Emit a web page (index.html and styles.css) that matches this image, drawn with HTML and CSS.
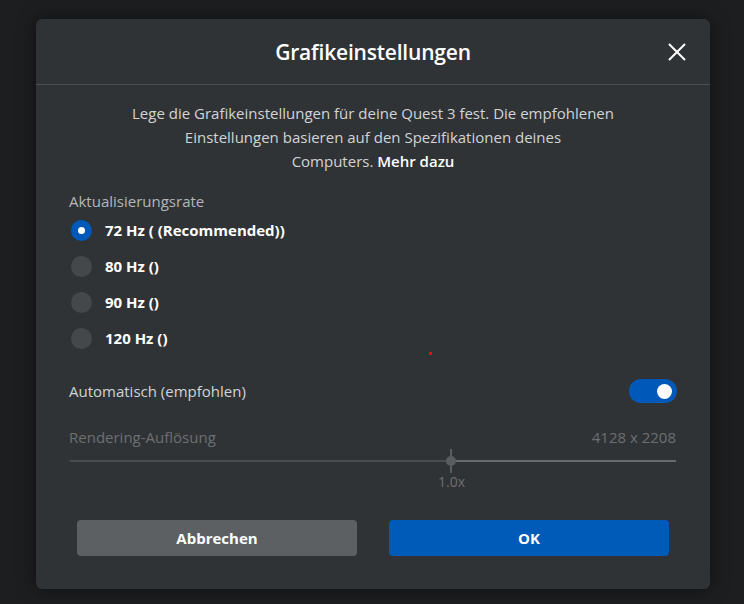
FILE: index.html
```html
<!DOCTYPE html>
<html lang="de">
	<head>
		<meta charset="UTF-8">
		<title>Grafikeinstellungen</title>
		<link rel="stylesheet" href="styles.css">
	</head>
	<body>
		<div class="dialog">
			<div class="head">
				<h1 class="title">Grafikeinstellungen</h1>
				<svg class="close" width="20" height="20" viewBox="0 0 20 20">
					<path d="M2 2 L18 18 M18 2 L2 18" stroke="#fff" stroke-width="2" fill="none"/>
				</svg>
			</div>
			<div class="body">
				<p class="intro">Lege die Grafikeinstellungen für deine Quest 3 fest. Die empfohlenen<br>Einstellungen basieren auf den Spezifikationen deines<br>Computers. <a class="more">Mehr dazu</a></p>

				<div class="label">Aktualisierungsrate</div>
				<div class="radios">
					<div class="radio on"><span class="dot"></span>72 Hz ( (Recommended))</div>
					<div class="radio"><span class="dot"></span>80 Hz ()</div>
					<div class="radio"><span class="dot"></span>90 Hz ()</div>
					<div class="radio"><span class="dot"></span>120 Hz ()</div>
				</div>

				<div class="auto">
					<span>Automatisch (empfohlen)</span>
					<div class="toggle"><div class="knob"></div></div>
				</div>

				<div class="res">
					<span>Rendering-Auflösung</span>
					<span>4128 x 2208</span>
				</div>
				<div class="slider">
					<div class="track left"></div>
					<div class="thumb"></div>
					<div class="track right"></div>
				</div>
				<div class="value">1.0x</div>

				<div class="buttons">
					<button class="btn cancel">Abbrechen</button>
					<button class="btn ok">OK</button>
				</div>
			</div>
			<div class="mark"></div>
		</div>
	</body>
</html>
```
FILE: styles.css
```css
* {
	margin: 0;
	padding: 0;
	box-sizing: border-box;
}
body {
	width: 744px;
	height: 604px;
	background: #1d1e20;
	font-family: "Open Sans", "Noto Sans", sans-serif;
	padding: 19px 34px 15px 36px;
	overflow: hidden;
}
.dialog {
	position: relative;
	width: 674px;
	height: 570px;
	background: #303336;
	border-radius: 6px;
	box-shadow: 0 0 18px rgba(0,0,0,0.5);
}
.head {
	height: 66px;
	border-bottom: 1px solid #4b4d50;
	display: flex;
	align-items: center;
	justify-content: center;
	position: relative;
}
.title {
	font-size: 21px;
	font-weight: 600;
	color: #fff;
	letter-spacing: -0.2px;
}
.close {
	position: absolute;
	right: 23px;
	top: 23px;
}
.body {
	padding: 16px 33px 0 33px;
}
.intro {
	text-align: center;
	font-size: 15px;
	line-height: 24px;
	color: #d2d3d4;
}
.more {
	color: #fff;
	font-weight: 600;
}
.label {
	margin-top: 18px;
	font-size: 15px;
	color: #b4b6b8;
	line-height: 20px;
}
.radios {
	margin-top: 1px;
}
.radio {
	display: flex;
	align-items: center;
	height: 36px;
	font-size: 15px;
	font-weight: 700;
	color: #fff;
}
.radio .dot {
	width: 21px;
	height: 21px;
	border-radius: 50%;
	background: #45484b;
	margin: 0 13px 0 2px;
	position: relative;
}
.radio.on .dot {
	background: #0059b9;
}
.radio.on .dot::after {
	content: "";
	position: absolute;
	left: 7px;
	top: 7px;
	width: 7px;
	height: 7px;
	border-radius: 50%;
	background: #fff;
}
.auto {
	margin-top: 23px;
	display: flex;
	justify-content: space-between;
	align-items: center;
	font-size: 15px;
	color: #d2d3d4;
}
.toggle {
	width: 48px;
	height: 24px;
	border-radius: 12px;
	background: #0059b9;
	display: flex;
	justify-content: flex-end;
	align-items: center;
	padding-right: 5px;
}
.knob {
	width: 15px;
	height: 15px;
	border-radius: 50%;
	background: #fff;
}
.res {
	margin-top: 24px;
	display: flex;
	justify-content: space-between;
	font-size: 15px;
	color: #6c6f72;
	padding-right: 1px;
}
.slider {
	margin-top: 2px;
	display: flex;
	align-items: center;
	height: 24px;
	padding: 0 1px;
}
.track {
	height: 2px;
}
.track.left {
	width: 376px;
	background: #4a4d50;
}
.track.right {
	flex: 1;
	background: #67696c;
}
.thumb {
	width: 10px;
	height: 10px;
	border-radius: 50%;
	background: #5a5d60;
	position: relative;
}
.thumb::before {
	content: "";
	position: absolute;
	left: 4px;
	top: -7px;
	width: 2px;
	height: 24px;
	background: #5a5d60;
}
.value {
	margin-top: -1px;
	font-size: 14px;
	color: #6c6f72;
	line-height: 20px;
	padding-left: 369px;
}
.buttons {
	margin-top: 28px;
	display: flex;
	gap: 32px;
	padding: 0 8px;
}
.btn {
	flex: 1;
	height: 36px;
	border: none;
	border-radius: 4px;
	font-family: "Open Sans", "Noto Sans", sans-serif;
	font-size: 15px;
	font-weight: 700;
	color: #fff;
}
.cancel {
	background: #5d6062;
}
.ok {
	background: #005ab8;
}
.mark {
	position: absolute;
	left: 393px;
	top: 333px;
	width: 3px;
	height: 3px;
	background: #e01010;
}
```
